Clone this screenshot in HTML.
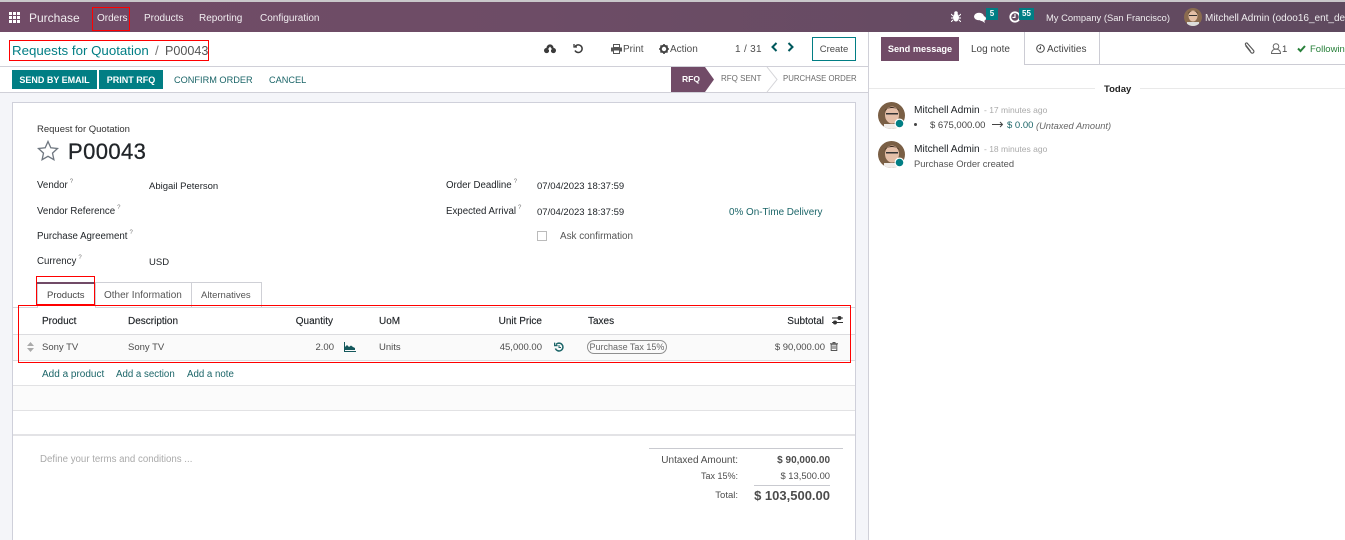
<!DOCTYPE html>
<html><head><meta charset="utf-8">
<style>
html,body{margin:0;padding:0;background:#fff}
#p{position:relative;width:1345px;height:540px;overflow:hidden;background:#fff;font-family:"Liberation Sans",sans-serif;font-size:10px;color:#4c4c4c}
#p div,#p svg{position:absolute}
.t{white-space:nowrap;line-height:18px}
.r{white-space:nowrap;line-height:18px;text-align:right}
.n{color:#fff;opacity:.9}
.g{color:#017e84}
.b{font-weight:700}
.d{color:#212529}
.red{border:1px solid #f00;box-sizing:border-box}
sup{font-size:6px;line-height:0;color:#777;margin-left:2px;vertical-align:5px}
</style></head><body><div id="p">
<div style="left:0;top:0;width:1345px;height:2px;background:#c9c7ca"></div>
<div style="left:0;top:2px;width:1345px;height:30px;background:linear-gradient(90deg,#714b67 0,#6d4c66 40%,#5f4a5f 100%)"></div>
<svg style="left:9px;top:12px" width="11" height="11" fill="#fff"><rect x="0" y="0" width="3" height="3"/><rect x="4" y="0" width="3" height="3"/><rect x="8" y="0" width="3" height="3"/><rect x="0" y="4" width="3" height="3"/><rect x="4" y="4" width="3" height="3"/><rect x="8" y="4" width="3" height="3"/><rect x="0" y="8" width="3" height="3"/><rect x="4" y="8" width="3" height="3"/><rect x="8" y="8" width="3" height="3"/></svg>
<div class="t n" style="left:29px;top:9px;font-size:12px">Purchase</div>
<div class="t n" style="left:97px;top:10px;font-size:10px">Orders</div>
<div class="t n" style="left:144px;top:10px;font-size:10px">Products</div>
<div class="t n" style="left:199px;top:10px;font-size:10px">Reporting</div>
<div class="t n" style="left:260px;top:10px;font-size:10px">Configuration</div>
<div class="red" style="left:92px;top:7px;width:38px;height:24px"></div>
<svg style="left:951px;top:11px" width="10" height="11" fill="#fff"><ellipse cx="5" cy="6.5" rx="3" ry="4"/><circle cx="5" cy="2" r="1.8"/><path d="M0 3l2 2M10 3L8 5M0 7h2M10 7H8M0 11l2-2M10 11L8 9" stroke="#fff" fill="none"/></svg>
<svg style="left:974px;top:12px" width="13" height="11" fill="#fff"><ellipse cx="5" cy="4.5" rx="5" ry="3.8"/><path d="M8 9l3 2-1-3z"/><ellipse cx="8.5" cy="6.5" rx="3.5" ry="2.6"/></svg>
<div style="left:986px;top:8px;width:12px;height:12px;background:#017e84"></div>
<div class="t b" style="left:986px;top:5px;width:12px;text-align:center;color:#fff;font-size:8px">5</div>
<svg style="left:1009px;top:11px" width="12" height="12" fill="none" stroke="#fff"><circle cx="6" cy="6" r="4.7" stroke-width="1.8"/><path d="M6 3v3.4H3.5" stroke-width="1.1"/></svg>
<div style="left:1019px;top:8px;width:15px;height:12px;background:#017e84"></div>
<div class="t b" style="left:1019px;top:5px;width:15px;text-align:center;color:#fff;font-size:8px">55</div>
<div class="t n" style="left:1046px;top:9px;font-size:9.4px">My Company (San Francisco)</div>
<svg style="left:1184px;top:8px" width="18" height="18"><defs><clipPath id="c0"><circle cx="9" cy="9" r="9"/></clipPath></defs><g clip-path="url(#c0)"><rect width="18" height="18" fill="#8a6b4f"/><ellipse cx="9" cy="8" rx="4.5" ry="5.5" fill="#e3bfa6"/><path d="M4 6Q9 0 14 6L13 4Q9 2 5 4z" fill="#3a2a20"/><rect x="5" y="7" width="8" height="1" fill="#333"/><rect x="3" y="14" width="12" height="5" fill="#ddd"/></g></svg>
<div class="t n" style="left:1205px;top:10px;font-size:10px">Mitchell Admin (odoo16_ent_demo)</div>

<!-- control panel -->
<div style="left:0;top:66px;width:868px;height:1px;background:#d0d0d8"></div>
<div style="left:0;top:92px;width:868px;height:1px;background:#d0d0d8"></div>
<div style="left:0;top:93px;width:868px;height:447px;background:#f4f5f9"></div>
<div style="left:868px;top:32px;width:1px;height:508px;background:#d0d0d8"></div>
<div class="t" style="left:12px;top:42px;font-size:13.3px;color:#017e84">Requests for Quotation</div>
<div class="t" style="left:155px;top:42px;font-size:13.3px;color:#777">/</div>
<div class="t" style="left:165px;top:42px;font-size:12.6px;color:#555">P00043</div>
<div class="red" style="left:9px;top:40px;width:200px;height:21px"></div>
<svg style="left:544px;top:44px" width="12" height="10" fill="#3b3b3b"><circle cx="6" cy="4" r="3.6"/><circle cx="2.6" cy="6.5" r="2.6"/><circle cx="9.4" cy="6.5" r="2.6"/><path d="M6 2.5L3.8 5.5H5V8h2V5.5h1.2z" fill="#fff"/></svg>
<svg style="left:573px;top:43px" width="10" height="11" fill="none" stroke="#3b3b3b" stroke-width="1.5"><path d="M2.2 3.5A3.8 3.8 0 1 1 2 7.5"/><path d="M1 1v3h3" stroke-width="1.3"/></svg>
<svg style="left:611px;top:44px" width="11" height="10" fill="#555"><rect x="2.5" y="0.5" width="6" height="3" fill="none" stroke="#555"/><rect x="0" y="3.5" width="11" height="4"/><rect x="2.5" y="6" width="6" height="3.5" fill="#fff" stroke="#555"/></svg>
<div class="t" style="left:623px;top:41px;font-size:10px">Print</div>
<svg style="left:659px;top:44px" width="10" height="10"><circle cx="5" cy="5" r="3.2" fill="none" stroke="#444" stroke-width="2"/><path d="M5 0v2M5 8v2M0 5h2M8 5h2M1.5 1.5l1.4 1.4M7.1 7.1l1.4 1.4M1.5 8.5l1.4-1.4M7.1 2.9l1.4-1.4" stroke="#444" stroke-width="1.6"/></svg>
<div class="t" style="left:670px;top:41px;font-size:10px">Action</div>
<div class="t" style="left:735px;top:41px;font-size:10px;letter-spacing:.3px">1 / 31</div>
<svg style="left:771px;top:42px" width="7" height="10" fill="none" stroke="#00585c" stroke-width="2"><path d="M5.5 1L1.5 5l4 4"/></svg>
<svg style="left:787px;top:42px" width="7" height="10" fill="none" stroke="#00585c" stroke-width="2"><path d="M1.5 1l4 4-4 4"/></svg>
<div class="t" style="left:812px;top:37px;width:44px;height:24px;box-sizing:border-box;border:1px solid #017e84;text-align:center;line-height:23px;font-size:9.5px">Create</div>

<!-- action buttons -->
<div class="t b" style="left:12px;top:70px;width:85px;height:19px;background:#017e84;color:#fff;text-align:center;line-height:20px;font-size:9px">SEND BY EMAIL</div>
<div class="t b" style="left:99px;top:70px;width:64px;height:19px;background:#017e84;color:#fff;text-align:center;line-height:20px;font-size:9px">PRINT RFQ</div>
<div class="t g" style="left:174px;top:71px;font-size:9.2px;color:#1b6568">CONFIRM ORDER</div>
<div class="t g" style="left:269px;top:71px;font-size:9.2px;color:#1b6568">CANCEL</div>
<svg style="left:670px;top:67px" width="198" height="25"><path d="M1 0H35L44 12.5 35 25H1z" fill="#714b67"/><path d="M97 0l10 12.5L97 25" fill="none" stroke="#d5d5d9"/></svg>
<div class="t b" style="left:682px;top:70px;font-size:8.5px;color:#fff">RFQ</div>
<div class="t" style="left:721px;top:70px;font-size:8px;color:#6b6b6b">RFQ SENT</div>
<div class="t" style="left:783px;top:70px;font-size:7.8px;color:#6b6b6b">PURCHASE ORDER</div>

<!-- sheet -->
<div style="left:12px;top:102px;width:844px;height:438px;box-sizing:border-box;background:#fff;border:1px solid #cfd0da;border-bottom:0"></div>
<div class="t" style="left:37px;top:121px;font-size:9.5px;color:#333">Request for Quotation</div>
<svg style="left:37px;top:140px" width="22" height="21" fill="none" stroke="#6f7780" stroke-width="1.3"><path d="M11 1.5l2.8 6.3 6.7.7-5 4.600 1.400 6.600-5.900-3.400-5.900 3.400 1.400-6.600-5-4.600 6.700-.7z"/></svg>
<div class="t d" style="left:68px;top:139px;font-size:22px;line-height:25px;letter-spacing:.4px;-webkit-text-stroke:.3px #212529">P00043</div>
<div class="t d" style="left:37px;top:177px;font-size:9.7px">Vendor<sup>?</sup></div>
<div class="t d" style="left:37px;top:203px;font-size:9.7px">Vendor Reference<sup>?</sup></div>
<div class="t d" style="left:37px;top:228px;font-size:9.7px">Purchase Agreement<sup>?</sup></div>
<div class="t d" style="left:37px;top:253px;font-size:9.7px">Currency<sup>?</sup></div>
<div class="t d" style="left:149px;top:178px;font-size:9.5px">Abigail Peterson</div>
<div class="t d" style="left:149px;top:254px;font-size:9.5px">USD</div>
<div class="t d" style="left:446px;top:177px;font-size:9.7px">Order Deadline<sup>?</sup></div>
<div class="t d" style="left:446px;top:203px;font-size:9.7px">Expected Arrival<sup>?</sup></div>
<div class="t d" style="left:537px;top:178px;font-size:9.5px">07/04/2023 18:37:59</div>
<div class="t d" style="left:537px;top:204px;font-size:9.5px">07/04/2023 18:37:59</div>
<div class="t" style="left:729px;top:204px;font-size:9.9px;color:#1b6568">0% On-Time Delivery</div>
<div style="left:537px;top:231px;width:10px;height:10px;box-sizing:border-box;border:1px solid #bbb"></div>
<div class="t" style="left:560px;top:228px;font-size:9.9px;color:#555">Ask confirmation</div>

<!-- tabs -->
<div style="left:13px;top:307px;width:842px;height:1px;background:#d5d5dc"></div>
<div style="left:37px;top:282px;width:225px;height:25px;box-sizing:border-box;border:1px solid #cfd0d6;border-bottom:0"></div>
<div style="left:37px;top:282px;width:58px;height:2px;background:#714b67"></div>
<div style="left:95px;top:282px;width:1px;height:25px;background:#cfd0d6"></div>
<div style="left:191px;top:282px;width:1px;height:25px;background:#cfd0d6"></div>
<div style="left:38px;top:306px;width:57px;height:2px;background:#fff"></div>
<div class="t" style="left:47px;top:287px;font-size:9.5px;color:#444">Products</div>
<div class="t" style="left:104px;top:287px;font-size:10px;color:#555">Other Information</div>
<div class="t" style="left:201px;top:287px;font-size:9.5px;color:#555">Alternatives</div>
<div class="red" style="left:36px;top:276px;width:59px;height:29px"></div>

<!-- table -->
<div style="left:13px;top:334px;width:842px;height:1px;background:#dcdcdf"></div>
<div style="left:13px;top:335px;width:842px;height:25px;background:#fafafa"></div>
<div style="left:13px;top:360px;width:842px;height:1px;background:#dcdcdf"></div>
<div class="t d" style="left:42px;top:313px;font-size:10px;-webkit-text-stroke:.15px #212529">Product</div>
<div class="t d" style="left:128px;top:313px;font-size:10px;-webkit-text-stroke:.15px #212529">Description</div>
<div class="r d" style="left:253px;top:313px;width:80px;font-size:10px;-webkit-text-stroke:.15px #212529">Quantity</div>
<div class="t d" style="left:379px;top:313px;font-size:10px;-webkit-text-stroke:.15px #212529">UoM</div>
<div class="r d" style="left:462px;top:313px;width:80px;font-size:10px;-webkit-text-stroke:.15px #212529">Unit Price</div>
<div class="t d" style="left:588px;top:313px;font-size:10px;-webkit-text-stroke:.15px #212529">Taxes</div>
<div class="r d" style="left:744px;top:313px;width:80px;font-size:10px;-webkit-text-stroke:.15px #212529">Subtotal</div>
<svg style="left:832px;top:315px" width="11" height="10" fill="none" stroke="#333"><path d="M0 3h11M0 7.500h11"/><circle cx="7.500" cy="3" r="1.500" fill="#333"/><circle cx="3" cy="7.500" r="1.500" fill="#333"/></svg>
<svg style="left:27px;top:342px" width="7" height="10" fill="#aaa"><path d="M3.500 0L7 4H0zM0 6h7L3.500 10z"/></svg>
<div class="t" style="left:42px;top:339px;font-size:9.5px">Sony TV</div>
<div class="t" style="left:128px;top:339px;font-size:9.5px">Sony TV</div>
<div class="r" style="left:254px;top:339px;width:80px;font-size:9.5px">2.00</div>
<svg style="left:344px;top:341px" width="12" height="11"><path d="M1 9V6l2-2 2 2 2-1.500 2 1.500 2 1v2z" fill="#14585c"/><path d="M.5 1v9.500H12" fill="none" stroke="#14585c"/></svg>
<div class="t" style="left:379px;top:339px;font-size:9.5px">Units</div>
<div class="r" style="left:462px;top:339px;width:80px;font-size:9.5px">45,000.00</div>
<svg style="left:554px;top:342px" width="10" height="10" fill="none" stroke="#1b6568" stroke-width="1.500"><path d="M2 2.600A3.900 3.900 0 1 1 1.400 6.500"/><path d="M.6 .6v3h3" stroke-width="1.200"/><path d="M5 3v2.500h2" stroke-width="1"/></svg>
<div class="t" style="left:587px;top:340px;width:80px;height:14px;box-sizing:border-box;border:1px solid #8f8f8f;border-radius:7px;text-align:center;line-height:12px;font-size:9px;color:#666">Purchase Tax 15%</div>
<div class="r" style="left:745px;top:339px;width:80px;font-size:9.5px">$ 90,000.00</div>
<svg style="left:830px;top:342px" width="8" height="9" fill="none" stroke="#555" stroke-width="1"><path d="M1.200 2.200h5.600v6.300H1.200zM0 1.800h8M3 1.500V.5h2v1M3 3.500v3.500M5 3.500v3.500"/></svg>
<div class="red" style="left:18px;top:305px;width:833px;height:58px"></div>
<div class="t" style="left:42px;top:366px;font-size:10px;color:#1b6568">Add a product</div>
<div class="t" style="left:116px;top:366px;font-size:9.7px;color:#1b6568">Add a section</div>
<div class="t" style="left:187px;top:366px;font-size:9.7px;color:#1b6568">Add a note</div>
<div style="left:13px;top:385px;width:842px;height:1px;background:#e2e2e4"></div>
<div style="left:13px;top:386px;width:842px;height:24px;background:#fbfbfb"></div>
<div style="left:13px;top:410px;width:842px;height:1px;background:#e2e2e4"></div>
<div style="left:13px;top:434px;width:842px;height:2px;background:#e3e3e6"></div>
<div class="t" style="left:40px;top:451px;font-size:9.7px;color:#aaa">Define your terms and conditions ...</div>
<div style="left:649px;top:448px;width:194px;height:1px;background:#c9cad0"></div>
<div class="r" style="left:638px;top:452px;width:100px;font-size:10px">Untaxed Amount:</div>
<div class="r b" style="left:730px;top:452px;width:100px;font-size:10px">$ 90,000.00</div>
<div class="r" style="left:638px;top:467px;width:100px;font-size:9px">Tax 15%:</div>
<div class="r" style="left:730px;top:467px;width:100px;font-size:9.4px">$ 13,500.00</div>
<div style="left:754px;top:485px;width:76px;height:1px;background:#c9cad0"></div>
<div class="r" style="left:638px;top:487px;width:100px;font-size:9.5px">Total:</div>
<div class="r b" style="left:730px;top:487px;width:100px;font-size:13px">$ 103,500.00</div>

<!-- chatter -->
<div class="t b" style="left:881px;top:37px;width:78px;height:24px;background:#714b67;color:#fff;text-align:center;line-height:25px;font-size:9.2px">Send message</div>
<div class="t" style="left:971px;top:41px;font-size:10px;color:#444">Log note</div>
<div style="left:1024px;top:32px;width:1px;height:32px;background:#ccccd4"></div>
<div style="left:1099px;top:32px;width:1px;height:32px;background:#ccccd4"></div>
<div style="left:1024px;top:64px;width:321px;height:1px;background:#ccccd4"></div>
<svg style="left:1036px;top:44px" width="9" height="9" fill="none" stroke="#444"><circle cx="4.500" cy="4.500" r="3.800"/><path d="M4.500 2.500v2.200H2.800"/></svg>
<div class="t" style="left:1047px;top:41px;font-size:10px;color:#444">Activities</div>
<svg style="left:1243px;top:42px" width="12" height="13" fill="none" stroke="#555" stroke-width="1.100"><path d="M2.500 3.500l5.500 7a1.600 1.600 0 0 0 2.600-2L4.500 1.500a1.100 1.100 0 0 0-2 1.200l5 6.500"/></svg>
<svg style="left:1271px;top:43px" width="10" height="11" fill="none" stroke="#666"><circle cx="5" cy="3.500" r="2.800"/><path d="M.5 10.500c0-6 9-6 9 0z"/></svg>
<div class="t" style="left:1282px;top:41px;font-size:9.500px;color:#444">1</div>
<svg style="left:1297px;top:44px" width="9" height="9" fill="none" stroke="#28803a" stroke-width="2"><path d="M1 4.500l2.500 2.500L8 2"/></svg>
<div class="t" style="left:1310px;top:41px;font-size:9.500px;color:#28803a">Following</div>
<div style="left:869px;top:88px;width:226px;height:1px;background:#e9e9e9"></div>
<div style="left:1140px;top:88px;width:205px;height:1px;background:#e9e9e9"></div>
<div class="t b" style="left:1104px;top:81px;font-size:9.500px;color:#222">Today</div>

<svg style="left:878px;top:102px" width="28" height="28"><defs><clipPath id="c1"><circle cx="13.500" cy="13.500" r="13.500"/></clipPath></defs><g clip-path="url(#c1)"><rect width="27" height="27" fill="#7a5f45"/><ellipse cx="14" cy="13" rx="7" ry="8.500" fill="#e4bfa8"/><path d="M6 10Q14 0 22 10L20 7Q14 5 8 7z" fill="#2e2018"/><rect x="8" y="11" width="12" height="1.500" fill="#333"/><rect x="6" y="22" width="16" height="6" fill="#f0ece9"/></g><circle cx="21.500" cy="21.500" r="5" fill="#fff"/><circle cx="21.500" cy="21.500" r="3.800" fill="#017e84"/></svg>
<svg style="left:878px;top:141px" width="28" height="28"><g clip-path="url(#c1)"><rect width="27" height="27" fill="#7a5f45"/><ellipse cx="14" cy="13" rx="7" ry="8.500" fill="#e4bfa8"/><path d="M6 10Q14 0 22 10L20 7Q14 5 8 7z" fill="#2e2018"/><rect x="8" y="11" width="12" height="1.500" fill="#333"/><rect x="6" y="22" width="16" height="6" fill="#f0ece9"/></g><circle cx="21.500" cy="21.500" r="5" fill="#fff"/><circle cx="21.500" cy="21.500" r="3.800" fill="#017e84"/></svg>
<div class="t d" style="left:914px;top:102px;font-size:10.2px">Mitchell Admin</div>
<div class="t" style="left:984px;top:101px;font-size:8.500px;color:#aaa">- 17 minutes ago</div>
<div style="left:914px;top:123px;width:3px;height:3px;border-radius:50%;background:#444"></div>
<div class="t" style="left:930px;top:117px;font-size:9.500px;color:#444">$ 675,000.00</div>
<svg style="left:992px;top:121px" width="12" height="7" fill="none" stroke="#444"><path d="M0 3.500h10M8 1l2.500 2.500L8 6"/></svg>
<div class="t" style="left:1007px;top:117px;font-size:9.500px;color:#1b6568">$ 0.00</div>
<div class="t" style="left:1036px;top:117px;font-size:9.300px;font-style:italic;color:#666">(Untaxed Amount)</div>
<div class="t d" style="left:914px;top:141px;font-size:10.2px">Mitchell Admin</div>
<div class="t" style="left:984px;top:140px;font-size:8.500px;color:#aaa">- 18 minutes ago</div>
<div class="t" style="left:914px;top:155px;font-size:9.400px;color:#555">Purchase Order created</div>
</div></body></html>
